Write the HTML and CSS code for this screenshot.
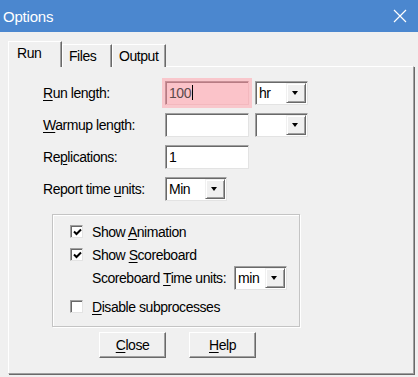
FILE: index.html
```html
<!DOCTYPE html>
<html>

<head>
	<meta charset="UTF-8">
	<meta name="viewport" content="width=device-width, initial-scale=1.0">
	<title>Options</title>
	<link rel="stylesheet" href="styles.css">
</head>

<body>
	<div class="titlebar">
		<span class="title">Options</span>
		<svg class="close-x" width="14" height="14" viewBox="0 0 14 14">
			<path d="M1 1 L13 13 M13 1 L1 13" stroke="#fff" stroke-width="1.2" fill="none" />
		</svg>
	</div>

	<div class="tabs">
		<div class="tab active">Run</div>
		<div class="tab">Files</div>
		<div class="tab">Output</div>
	</div>

	<div class="panel">
		<div class="fields">
			<div class="row">
				<label class="lbl"><u>R</u>un length:</label>
				<div class="glow">
					<div class="edit edit-error">100<span class="caret"></span></div>
				</div>
				<div class="combo combo-unit"><span class="combo-text">hr</span><span class="drop"></span></div>
			</div>
			<div class="row">
				<label class="lbl"><u>W</u>armup length:</label>
				<div class="edit"></div>
				<div class="combo combo-unit"><span class="combo-text"></span><span class="drop"></span></div>
			</div>
			<div class="row">
				<label class="lbl">Re<u>p</u>lications:</label>
				<div class="edit">1</div>
			</div>
			<div class="row">
				<label class="lbl">Report time <u>u</u>nits:</label>
				<div class="combo combo-wide"><span class="combo-text">Min</span><span class="drop"></span></div>
			</div>
		</div>

		<div class="group">
			<div class="check-row">
				<span class="checkbox"><svg width="9" height="9" viewBox="0 0 9 9"><path d="M1 3.5 L3.5 6 L8 1.5" stroke="#000" stroke-width="2" fill="none" /></svg></span>
				<span>Show <u>A</u>nimation</span>
			</div>
			<div class="check-row">
				<span class="checkbox"><svg width="9" height="9" viewBox="0 0 9 9"><path d="M1 3.5 L3.5 6 L8 1.5" stroke="#000" stroke-width="2" fill="none" /></svg></span>
				<span>Show <u>S</u>coreboard</span>
			</div>
			<div class="sub-row">
				<span>Scoreboard <u>T</u>ime units:</span>
				<div class="combo combo-unit"><span class="combo-text">min</span><span class="drop"></span></div>
			</div>
			<div class="check-row">
				<span class="checkbox"></span>
				<span><u>D</u>isable subprocesses</span>
			</div>
		</div>

		<div class="buttons">
			<button class="btn"><u>C</u>lose</button>
			<button class="btn"><u>H</u>elp</button>
		</div>
	</div>
</body>

</html>
```

FILE: styles.css
```css
html {
	box-sizing: border-box;
}

*,
*:before,
*:after {
	box-sizing: inherit;
}

body {
	margin: 0;
	width: 418px;
	height: 377px;
	overflow: hidden;
	background: #f0f0f0;
	color: #000;
	font-family: "Liberation Sans", Arial, sans-serif;
	font-size: 14px;
	letter-spacing: -0.45px;
	white-space: nowrap;
}

u {
	text-decoration-thickness: 1px;
	text-underline-offset: 2px;
}

.titlebar {
	height: 32px;
	background: #4b87cf;
	display: flex;
	align-items: center;
	justify-content: space-between;
	padding: 0 11px 0 3px;
}

.title {
	color: #fff;
	font-size: 15px;
	letter-spacing: -0.2px;
}

.close-x {
	display: block;
}

/* tabs */
.tabs {
	display: flex;
	align-items: flex-end;
	padding: 9px 0 0 8px;
	position: relative;
	z-index: 1;
	margin-bottom: -1px;
}

.tab {
	height: 23px;
	padding: 3px 0 0 6px;
	border-top: 1px solid #fff;
	border-left: 1px solid #fff;
	border-right: 1px solid #696969;
	box-shadow: inset -1px 0 0 #a0a0a0;
	background: #f0f0f0;
}

.tab:nth-child(2) {
	width: 50px;
}

.tab:nth-child(3) {
	width: 54px;
}

.tab.active {
	width: 54px;
	height: 26px;
	padding: 3px 0 0 8px;
}

/* main page */
.panel {
	margin: 0 4px 0 8px;
	height: 308px;
	border-top: 1px solid #fff;
	border-left: 1px solid #fff;
	border-right: 1px solid #a0a0a0;
	border-bottom: 1px solid #a0a0a0;
	box-shadow: 1px 1px 0 #696969;
	padding: 14px 0 0 34px;
}

.fields {
	display: flex;
	flex-direction: column;
	gap: 8px;
}

.row {
	display: flex;
	align-items: center;
	height: 24px;
}

.lbl {
	width: 122px;
}

.edit {
	width: 84px;
	height: 24px;
	background: #fff;
	border-top: 1px solid #a0a0a0;
	border-left: 1px solid #a0a0a0;
	border-right: 1px solid #e3e3e3;
	border-bottom: 1px solid #e3e3e3;
	box-shadow: inset 1px 1px 0 #696969;
	padding: 3px 0 0 3px;
	line-height: 16px;
}

.glow {
	box-shadow: 0 0 0 3px #f9c7cc;
	background: #f9c7cc;
}

.edit-error {
	background: #fbc3c9;
	border-top-color: #c89097;
	border-left-color: #c89097;
	border-right-color: #f3b8be;
	border-bottom-color: #f3b8be;
	box-shadow: inset 1px 1px 0 #b77b83;
	color: #5a4a4c;
}

.caret {
	display: inline-block;
	width: 1px;
	height: 15px;
	margin-left: 1px;
	background: #000;
	vertical-align: top;
}

.combo {
	height: 24px;
	display: flex;
	align-items: center;
	justify-content: space-between;
	background: #fff;
	border-top: 1px solid #a0a0a0;
	border-left: 1px solid #a0a0a0;
	border-right: 1px solid #e3e3e3;
	border-bottom: 1px solid #e3e3e3;
	box-shadow: inset 1px 1px 0 #696969;
	padding: 1px 1px 1px 3px;
}

.combo-unit {
	width: 53px;
	margin-left: 6px;
}

.combo-wide {
	width: 62px;
}

.drop {
	width: 20px;
	height: 20px;
	background: #f0f0f0;
	border-top: 1px solid #f0f0f0;
	border-left: 1px solid #f0f0f0;
	border-right: 1px solid #696969;
	border-bottom: 1px solid #696969;
	box-shadow: inset 1px 1px 0 #fff, inset -1px -1px 0 #a0a0a0;
	position: relative;
}

.drop:after {
	content: "";
	position: absolute;
	left: 5px;
	top: 7px;
	border-top: 4px solid #000;
	border-left: 3.5px solid transparent;
	border-right: 3.5px solid transparent;
}

/* group of options */
.group {
	margin: 13px 0 0 9px;
	width: 248px;
	height: 113px;
	border: 1px solid #c4c4c4;
	box-shadow: inset 1px 1px 0 #fff, 1px 1px 0 #fff;
	padding: 5px 0 0 17px;
}

.check-row {
	display: flex;
	align-items: center;
	height: 23px;
	gap: 9px;
}

.checkbox {
	width: 13px;
	height: 13px;
	background: #fff;
	border-top: 1px solid #a0a0a0;
	border-left: 1px solid #a0a0a0;
	border-right: 1px solid #e3e3e3;
	border-bottom: 1px solid #e3e3e3;
	box-shadow: inset 1px 1px 0 #696969;
	display: flex;
	align-items: center;
	justify-content: center;
	padding: 1px 0 0 1px;
}

.checkbox svg {
	display: block;
}

.sub-row {
	display: flex;
	align-items: center;
	height: 24px;
	margin: 0 0 5px 22px;
}

.sub-row .combo-unit {
	margin-left: 8px;
}

/* buttons */
.buttons {
	display: flex;
	gap: 23px;
	margin: 5px 0 0 56px;
}

.btn {
	width: 67px;
	height: 26px;
	font-family: inherit;
	font-size: 14px;
	letter-spacing: -0.45px;
	color: #000;
	background: #f0f0f0;
	border-top: 1px solid #fff;
	border-left: 1px solid #fff;
	border-right: 1px solid #696969;
	border-bottom: 1px solid #696969;
	box-shadow: inset -1px -1px 0 #a0a0a0;
	padding: 0;
}
```
